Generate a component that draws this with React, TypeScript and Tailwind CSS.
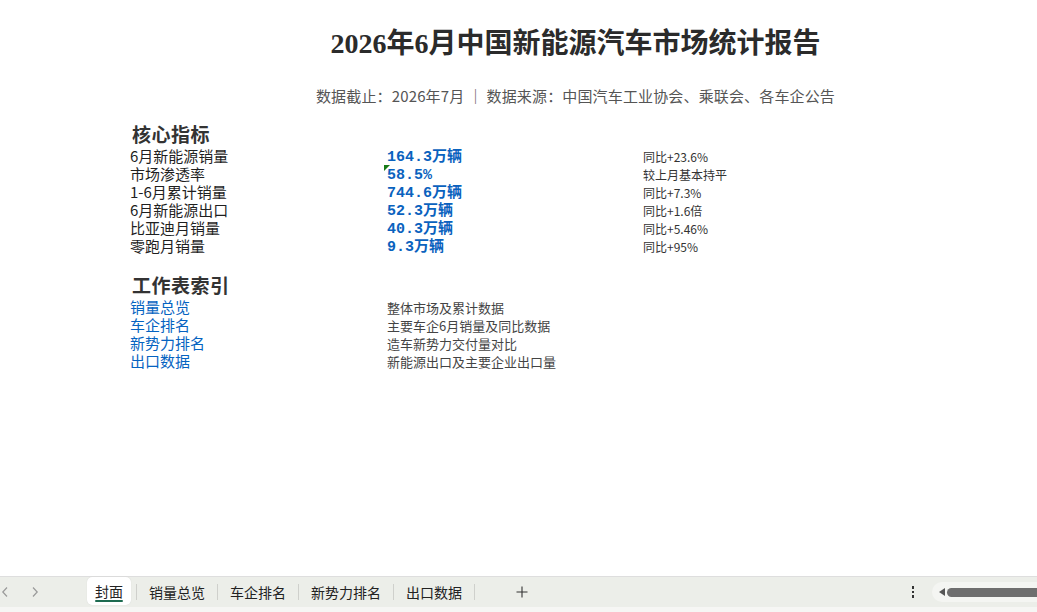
import React from 'react';

const metrics = [
  { label: '6月新能源销量', value: '164.3万辆', change: '同比+23.6%' },
  { label: '市场渗透率', value: '58.5%', change: '较上月基本持平', flag: true },
  { label: '1-6月累计销量', value: '744.6万辆', change: '同比+7.3%' },
  { label: '6月新能源出口', value: '52.3万辆', change: '同比+1.6倍' },
  { label: '比亚迪月销量', value: '40.3万辆', change: '同比+5.46%' },
  { label: '零跑月销量', value: '9.3万辆', change: '同比+95%' },
];

const sheets = [
  { name: '销量总览', desc: '整体市场及累计数据' },
  { name: '车企排名', desc: '主要车企6月销量及同比数据' },
  { name: '新势力排名', desc: '造车新势力交付量对比' },
  { name: '出口数据', desc: '新能源出口及主要企业出口量' },
];

const tabs = ['销量总览', '车企排名', '新势力排名', '出口数据'];

function SheetTabs() {
  return (
    <div className="h-[31px] border-t border-[#dedede] bg-[#eceee9] flex items-center text-[14px] text-[#222] font-['Noto_Sans_CJK_SC',sans-serif]">
      {/* sheet nav arrows */}
      <div className="w-[87px] flex items-center pl-[1px] gap-[22px] text-[#9a9a9a]">
        <svg width="8" height="12" viewBox="0 0 8 12" fill="none" stroke="currentColor" strokeWidth="1.2">
          <path d="M6 1.5 1.8 6 6 10.5" />
        </svg>
        <svg width="8" height="12" viewBox="0 0 8 12" fill="none" stroke="currentColor" strokeWidth="1.2">
          <path d="M2 1.5 6.2 6 2 10.5" />
        </svg>
      </div>

      <div className="relative h-[28px] -mt-[3px] w-[44px] bg-white rounded-[5px] flex items-center justify-center shadow-[0_0_1px_rgba(0,0,0,0.15)]">
        <span className="leading-none">封面</span>
        <div className="absolute bottom-[3px] left-[8px] right-[8px] h-[2px] bg-[#1d6b50] rounded" />
      </div>
      <div className="w-[5px]" />
      <div className="w-px h-[16px] bg-[#cfd0cc]" />

      {tabs.map((t) => (
        <React.Fragment key={t}>
          <div className="px-[12px] leading-none">{t}</div>
          <div className="w-px h-[16px] bg-[#cfd0cc]" />
        </React.Fragment>
      ))}

      <div className="ml-[41px] text-[#333]">
        <svg width="12" height="12" viewBox="0 0 12 12" stroke="currentColor" strokeWidth="1.1">
          <path d="M6 0.5v11M0.5 6h11" />
        </svg>
      </div>

      <div className="flex-1" />

      <div className="w-[4px] flex flex-col items-center gap-[2px] mr-[17px]">
        <div className="w-[2.5px] h-[2.5px] bg-[#333]" />
        <div className="w-[2.5px] h-[2.5px] bg-[#333]" />
        <div className="w-[2.5px] h-[2.5px] bg-[#333]" />
      </div>

      <div className="w-[105px] h-[20px] bg-[#f4f5f2] rounded-l-full flex items-center pl-[7px]">
        <svg width="6" height="8" viewBox="0 0 6 8">
          <path d="M6 0v8L0 4z" fill="#555" />
        </svg>
        <div className="ml-[2px] flex-1 h-[9px] bg-[#6e6e6e] rounded-l-full" />
      </div>
    </div>
  );
}

export default function App() {
  return (
    <div className="h-screen w-full flex flex-col bg-white overflow-hidden">
      <div className="flex-1 font-['Noto_Sans_CJK_SC',sans-serif]">
        {/* report title */}
        <div className="pl-[114px] pt-[26px] text-center">
          <h1 className="h-[36px] leading-[36px] text-[28px] font-bold text-[#2b2b2b] font-['Liberation_Serif','Noto_Sans_CJK_SC',serif]">
            2026年6月中国新能源汽车市场统计报告
          </h1>
          <p className="mt-[24px] h-[20px] leading-[20px] text-[15px] tracking-[0.15px] text-[#555]">
            数据截止：2026年7月 ｜ 数据来源：中国汽车工业协会、乘联会、各车企公告
          </p>
        </div>

        <div className="pl-[130px] mt-[19px]">
          <h2 className="pl-[2px] h-[22px] leading-[22px] text-[19px] tracking-[0.5px] font-bold text-[#333] font-['Liberation_Serif','Noto_Sans_CJK_SC',serif]">
            核心指标
          </h2>
          <div className="grid grid-cols-[254px_256px_1fr]">
            {metrics.map((m) => (
              <React.Fragment key={m.label}>
                <div className="h-[18px] leading-[18px] text-[15px] text-[#1f1f1f]">{m.label}</div>
                <div className="relative h-[18px] leading-[22px] pl-[3px] text-[15px] font-bold text-[#0a62be] font-['Liberation_Mono','Noto_Sans_CJK_SC',monospace]">
                  {m.flag && (
                    <svg className="absolute left-0 top-0" width="6" height="6" viewBox="0 0 6 6">
                      <path d="M0 0h6L0 6z" fill="#177a17" />
                    </svg>
                  )}
                  {m.value}
                </div>
                <div className="h-[18px] leading-[20px] pl-[3px] text-[12px] text-[#333]">{m.change}</div>
              </React.Fragment>
            ))}
          </div>

          <h2 className="mt-[21px] pl-[2px] h-[22px] leading-[22px] text-[19px] tracking-[0.5px] font-bold text-[#333] font-['Liberation_Serif','Noto_Sans_CJK_SC',serif]">
            工作表索引
          </h2>
          <div className="grid grid-cols-[254px_1fr]">
            {sheets.map((s) => (
              <React.Fragment key={s.name}>
                <div className="h-[18px] leading-[18px] text-[15px] text-[#0563c1]">{s.name}</div>
                <div className="h-[18px] leading-[20px] pl-[3px] text-[13px] text-[#444]">{s.desc}</div>
              </React.Fragment>
            ))}
          </div>
        </div>
      </div>

      <SheetTabs />
      <div className="h-[5px] bg-[#f6f6f4]" />
    </div>
  );
}
